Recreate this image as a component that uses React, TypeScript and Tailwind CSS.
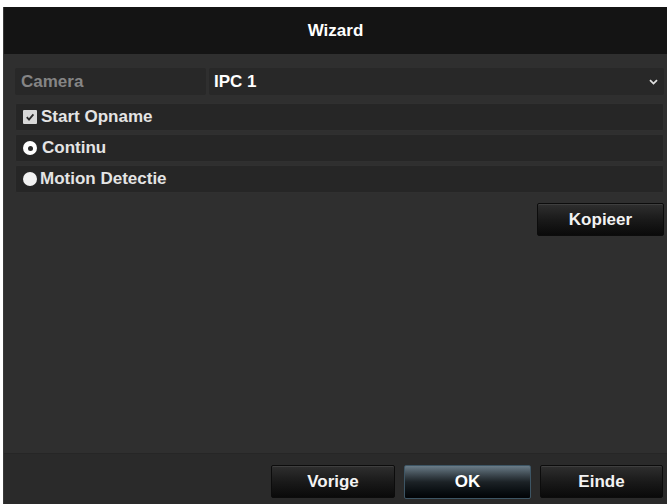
export default function App() {
  const rowCls =
    "flex items-center h-[28px] bg-[#262626] border border-[#303030] rounded-[2px] text-[17px] font-bold text-[#e4e4e4] pl-[7px]";
  const btnCls =
    "flex items-center justify-center h-[33px] rounded-[2px] border border-[#0c0c0c] bg-gradient-to-b from-[#2f2f2f] via-[#1a1a1a] to-[#0a0a0a] text-[17px] font-bold text-[#f2f2f2] shadow-[inset_0_1px_0_rgba(255,255,255,0.08)]";

  return (
    <div className="w-[670px] h-[504px] bg-white pt-[7px] px-[3px] font-['Liberation_Sans',Arial,sans-serif]">
      <div className="h-full flex flex-col bg-[#2f2f2f] border-l border-[#3a3a3a]">
        {/* Header */}
        <div className="h-[47px] shrink-0 bg-[#141414] flex items-center justify-center text-[17px] font-bold text-white">
          Wizard
        </div>

        {/* Body */}
        <div className="flex-1 flex flex-col pl-[11px] pr-[3px] pt-[14px]">
          <div className="flex h-[27px] gap-[3px]">
            <div className="w-[191px] bg-[#282828] rounded-[2px] flex items-center pl-[6px] text-[17px] font-bold text-[#858585]">
              Camera
            </div>
            <div className="flex-1 bg-[#282828] rounded-[2px] flex items-center pl-[5px] pr-[6px] text-[17px] font-bold text-white">
              <span className="flex-1">IPC 1</span>
              <svg width="9" height="6" viewBox="0 0 9 6">
                <path d="M1 1.2 L4.5 4.6 L8 1.2" fill="none" stroke="#e0e0e0" strokeWidth="1.8" />
              </svg>
            </div>
          </div>

          <div className="mt-[8px] flex flex-col gap-[3px]">
            <div className={rowCls}>
              <span className="w-[14px] h-[14px] bg-[#d8d8d8] rounded-[1px] flex items-center justify-center mr-[4px]">
                <svg width="10" height="10" viewBox="0 0 10 10">
                  <path d="M1.8 5.2 L4 7.6 L8.4 2.4" fill="none" stroke="#2a2a2a" strokeWidth="1.8" />
                </svg>
              </span>
              Start Opname
            </div>
            <div className={rowCls}>
              <span className="w-[14px] h-[14px] rounded-full bg-white flex items-center justify-center mr-[5px]">
                <span className="w-[5px] h-[5px] rounded-full bg-[#2a2a2a]" />
              </span>
              Continu
            </div>
            <div className={rowCls}>
              <span className="w-[14px] h-[14px] rounded-full bg-[#f2f2f2] mr-[3px]" />
              Motion Detectie
            </div>
          </div>

          <div className="mt-[10px] flex justify-end">
            <div className={`${btnCls} w-[127px] h-[31px]`}>Kopieer</div>
          </div>
        </div>

        {/* Footer */}
        <div className="h-[51px] shrink-0 bg-[#2a2a2a] border-t border-[#262626] flex items-start justify-end gap-[9px] pt-[11px] pr-[4px]">
          <div className={`${btnCls} w-[124px]`}>Vorige</div>
          <div className="w-[127px] h-[34px] flex items-center justify-center rounded-[2px] border border-[#3d5564] bg-gradient-to-b from-[#6a7c88] via-[#1c2226] to-[#020406] text-[17px] font-bold text-white">
            OK
          </div>
          <div className={`${btnCls} w-[123px]`}>Einde</div>
        </div>
      </div>
    </div>
  );
}
